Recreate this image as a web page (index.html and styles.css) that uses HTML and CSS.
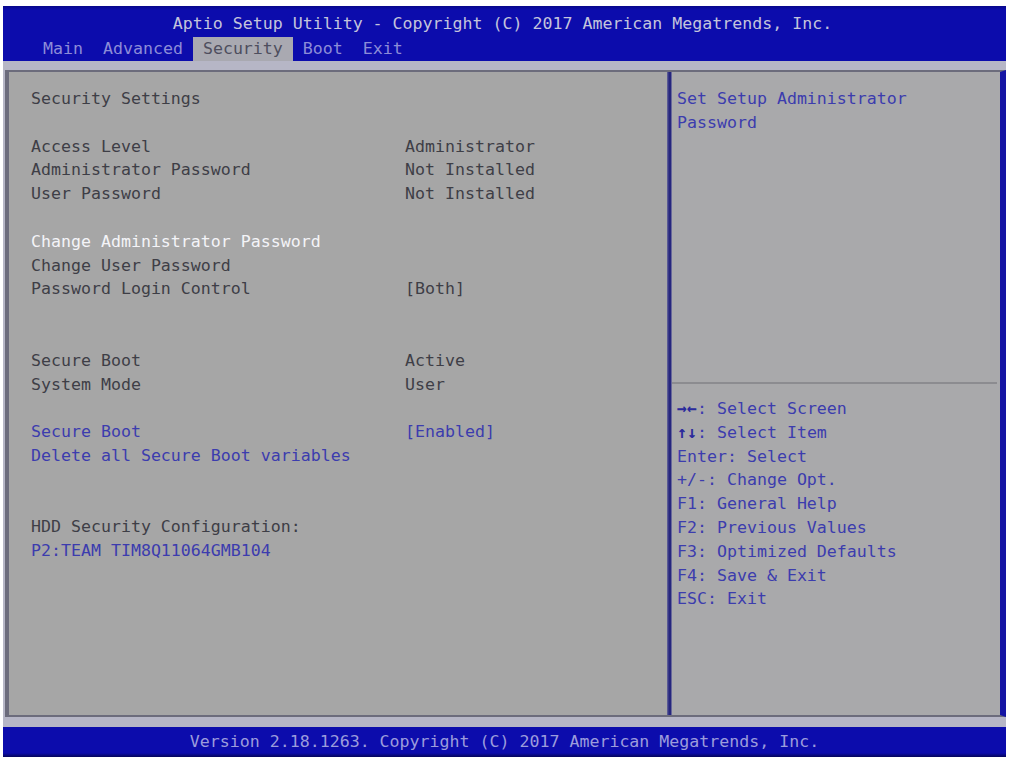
FILE: index.html
```html
<!DOCTYPE html>
<html lang="en">
<head>
<meta charset="utf-8">
<title>Aptio Setup Utility</title>
<link rel="stylesheet" href="styles.css">
</head>
<body>
<div class="screen">
  <header class="header">
    <div class="title">Aptio Setup Utility - Copyright (C) 2017 American Megatrends, Inc.</div>
    <nav class="menu">
      <span class="tab">Main</span>
      <span class="tab">Advanced</span>
      <span class="tab active">Security</span>
      <span class="tab">Boot</span>
      <span class="tab">Exit</span>
    </nav>
  </header>

  <div class="band">
    <div class="frame">
      <section class="settings">
        <div class="row"><span class="label">Security Settings</span></div>
        <div class="row gap"></div>
        <div class="row"><span class="label">Access Level</span><span class="value">Administrator</span></div>
        <div class="row"><span class="label">Administrator Password</span><span class="value">Not Installed</span></div>
        <div class="row"><span class="label">User Password</span><span class="value">Not Installed</span></div>
        <div class="row gap"></div>
        <div class="row selected"><span class="label">Change Administrator Password</span></div>
        <div class="row"><span class="label">Change User Password</span></div>
        <div class="row"><span class="label">Password Login Control</span><span class="value">[Both]</span></div>
        <div class="row gap"></div>
        <div class="row gap"></div>
        <div class="row"><span class="label">Secure Boot</span><span class="value">Active</span></div>
        <div class="row"><span class="label">System Mode</span><span class="value">User</span></div>
        <div class="row gap"></div>
        <div class="row link"><span class="label">Secure Boot</span><span class="value">[Enabled]</span></div>
        <div class="row link"><span class="label">Delete all Secure Boot variables</span></div>
        <div class="row gap"></div>
        <div class="row gap"></div>
        <div class="row"><span class="label">HDD Security Configuration:</span></div>
        <div class="row link"><span class="label">P2:TEAM TIM8Q11064GMB104</span></div>
      </section>

      <div class="divider"></div>

      <aside class="side">
        <div class="help-item">
          <div class="row">Set Setup Administrator</div>
          <div class="row">Password</div>
        </div>
        <div class="keys">
          <div class="row"><span class="arrow">→←</span>: Select Screen</div>
          <div class="row"><span class="arrow">↑↓</span>: Select Item</div>
          <div class="row">Enter: Select</div>
          <div class="row">+/-: Change Opt.</div>
          <div class="row">F1: General Help</div>
          <div class="row">F2: Previous Values</div>
          <div class="row">F3: Optimized Defaults</div>
          <div class="row">F4: Save &amp; Exit</div>
          <div class="row">ESC: Exit</div>
        </div>
      </aside>
    </div>
  </div>

  <footer class="footer">Version 2.18.1263. Copyright (C) 2017 American Megatrends, Inc.</footer>
</div>
</body>
</html>
```

FILE: styles.css
```css
html, body {
  margin: 0;
  padding: 0;
  background: #ffffff;
}

body {
  font-family: "DejaVu Sans Mono", "Liberation Mono", monospace;
  font-size: 16.6px;
}

.screen {
  width: 1003px;
  margin-left: 3px;
  padding-top: 6px;
}

/* top title bar with the menu tabs */
.header {
  background: linear-gradient(#07078a 0, #0c0cac 4px, #0c0cac 100%);
  height: 55px;
  display: flex;
  flex-direction: column;
}

.title {
  height: 31px;
  line-height: 35px;
  text-align: center;
  color: #c4c4dc;
  padding-right: 4px;
}

.menu {
  display: flex;
  padding-left: 30px;
  height: 24px;
}

.tab {
  padding: 0 10px;
  line-height: 24px;
  color: #8c8cd8;
}

.tab.active {
  background: #a9a9b1;
  color: #4e4e5e;
}

/* light strip surrounding the main frame */
.band {
  background: #b6b6c6;
  padding: 9px 0 10px 2px;
}

.frame {
  display: flex;
  height: 643px;
  border-top: 2px solid #6c6c7c;
  border-bottom: 2px solid #6c6c7c;
  border-left: 4px solid #6c6c7c;
  border-right: 6px solid #1515a4;
  background: #a6a6a6;
}

.row {
  height: 23.8px;
  line-height: 23.8px;
  white-space: pre;
}

.settings {
  width: 636px;
  padding: 15px 0 0 22px;
  color: #3e3e46;
}

.settings .row {
  display: grid;
  grid-template-columns: 374px auto;
}

.settings .selected {
  color: #f4f4f8;
}

.settings .link {
  color: #3c3cae;
}

.divider {
  width: 5px;
  background: linear-gradient(90deg, #6a6a9c, #26267e 40%, #26267e 70%, #8a8aa8);
}

.side {
  flex: 1;
  display: flex;
  flex-direction: column;
  background: #a9a9ab;
}

.help-item {
  height: 295px;
  padding: 15px 0 0 5px;
  color: #3c3cae;
  border-bottom: 2px solid #8c8c90;
  margin-right: 3px;
}

.keys {
  padding: 13px 0 0 5px;
  color: #3c3cae;
}

.keys .arrow {
  font-weight: bold;
  color: #2a2a9c;
}

/* bottom version strip */
.footer {
  height: 30px;
  line-height: 30px;
  text-align: center;
  color: #9c9cdc;
  background: linear-gradient(#0c0cac 0, #0c0cac 26px, #05055a 100%);
}
```
